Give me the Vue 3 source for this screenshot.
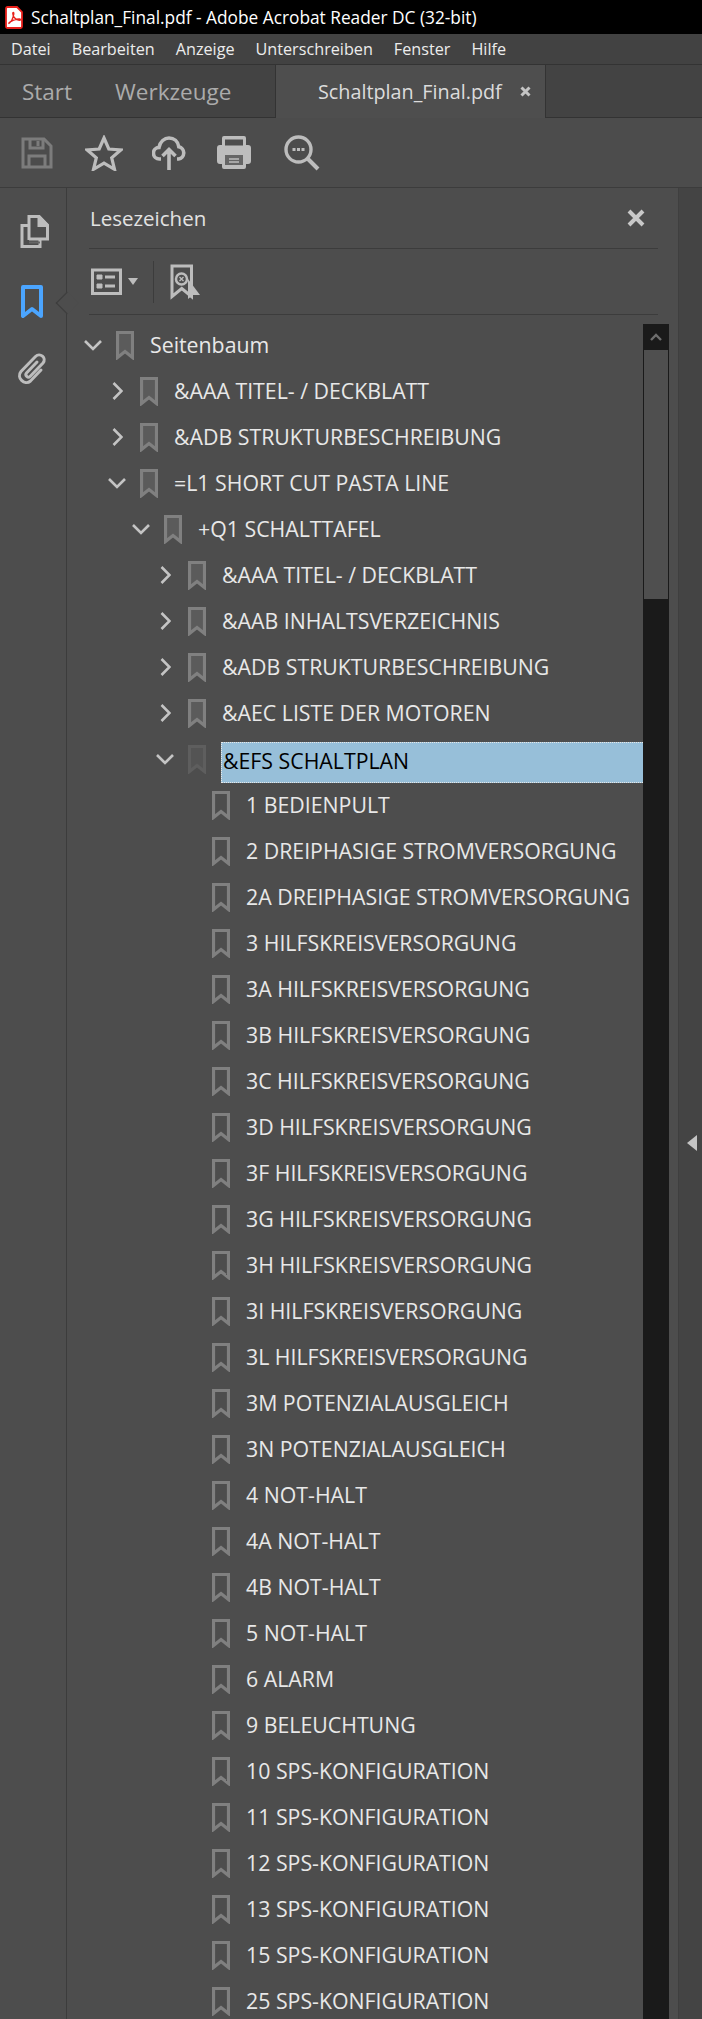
<script setup>
const menus = ['Datei', 'Bearbeiten', 'Anzeige', 'Unterschreiben', 'Fenster', 'Hilfe']
const leaves = ['1 BEDIENPULT','2 DREIPHASIGE STROMVERSORGUNG','2A DREIPHASIGE STROMVERSORGUNG','3 HILFSKREISVERSORGUNG','3A HILFSKREISVERSORGUNG','3B HILFSKREISVERSORGUNG','3C HILFSKREISVERSORGUNG','3D HILFSKREISVERSORGUNG','3F HILFSKREISVERSORGUNG','3G HILFSKREISVERSORGUNG','3H HILFSKREISVERSORGUNG','3I HILFSKREISVERSORGUNG','3L HILFSKREISVERSORGUNG','3M POTENZIALAUSGLEICH','3N POTENZIALAUSGLEICH','4 NOT-HALT','4A NOT-HALT','4B NOT-HALT','5 NOT-HALT','6 ALARM','9 BELEUCHTUNG','10 SPS-KONFIGURATION','11 SPS-KONFIGURATION','12 SPS-KONFIGURATION','13 SPS-KONFIGURATION','15 SPS-KONFIGURATION','25 SPS-KONFIGURATION']
const rows = [
  { t: 'Seitenbaum', l: 0, c: 'down' },
  { t: '&AAA TITEL- / DECKBLATT', l: 1, c: 'right' },
  { t: '&ADB STRUKTURBESCHREIBUNG', l: 1, c: 'right' },
  { t: '=L1 SHORT CUT PASTA LINE', l: 1, c: 'down' },
  { t: '+Q1 SCHALTTAFEL', l: 2, c: 'down' },
  { t: '&AAA TITEL- / DECKBLATT', l: 3, c: 'right' },
  { t: '&AAB INHALTSVERZEICHNIS', l: 3, c: 'right' },
  { t: '&ADB STRUKTURBESCHREIBUNG', l: 3, c: 'right' },
  { t: '&AEC LISTE DER MOTOREN', l: 3, c: 'right' },
  { t: '&EFS SCHALTPLAN', l: 3, c: 'down', sel: true },
  ...leaves.map(t => ({ t, l: 4 })),
]
</script>

<template>
  <div class="app">
    <header class="title">
      <svg class="pdf" width="18" height="23" viewBox="0 0 18 23">
        <path d="M2.500 1h9.500l5 5v14.500a1.500 1.500 0 0 1-1.500 1.500H2.500A1.500 1.500 0 0 1 1 20.500v-18A1.500 1.500 0 0 1 2.500 1z" fill="#fff" stroke="#e8201b" stroke-width="1.800"/>
        <path d="M3.500 17.500c2-1 4.500-5 5.300-9.500.3-2-1-2-1-.5 0 3 3 6.500 6.500 6.800 1.500 0 1.500-1.300 0-1.300-3 0-8.500 1.500-10.800 4.500z" fill="none" stroke="#e8201b" stroke-width="1.400"/>
      </svg>
      <span>Schaltplan_Final.pdf - Adobe Acrobat Reader DC (32-bit)</span>
    </header>

    <nav class="menu">
      <span v-for="m in menus" :key="m">{{ m }}</span>
    </nav>

    <div class="tabs">
      <div class="tabs-left">
        <span>Start</span>
        <span>Werkzeuge</span>
      </div>
      <div class="tab-active">
        <span>Schaltplan_Final.pdf</span>
        <svg width="11" height="11" viewBox="0 0 11 11"><path d="M1.500 1.500l8 8M9.500 1.500l-8 8" stroke="#c4c4c4" stroke-width="3"/></svg>
      </div>
      <div class="tabs-right"></div>
    </div>

    <div class="toolbar">
      <svg class="t-save" width="32" height="32" viewBox="0 0 32 32" fill="none" stroke="#7c7c7c" stroke-width="3">
        <path d="M2 2h21l7 7v21H2z"/><path d="M9 2v9h13V2M8 30V19h16v11"/><path d="M17 4v5" stroke-width="3"/>
      </svg>
      <svg class="t-star" width="38" height="36" viewBox="0 0 38 36" fill="none" stroke="#bdbdbd" stroke-width="3.200">
        <path d="M19 3l4.800 11 12 1-9.100 7.800 2.800 11.500L19 28.200 8.500 34.300l2.800-11.500L2.200 15l12-1z"/>
      </svg>
      <svg class="t-cloud" width="34" height="36" viewBox="0 0 34 36" fill="none" stroke="#bdbdbd" stroke-width="3.600">
        <path d="M9 24H7.500a5.800 5.800 0 0 1-.5-11.600C8 6.500 12.500 3 17 3c5 0 9 3.500 9.800 8.800A6.200 6.200 0 0 1 26.500 24H25"/>
        <path d="M17 35V15M10.500 21L17 14.500 23.500 21"/>
      </svg>
      <svg class="t-print" width="34" height="33" viewBox="0 0 34 33">
        <path d="M7 0h20a2 2 0 0 1 2 2v7h2a3 3 0 0 1 3 3v13a3 3 0 0 1-3 3h-2v3a2 2 0 0 1-2 2H7a2 2 0 0 1-2-2v-3H3a3 3 0 0 1-3-3V12a3 3 0 0 1 3-3h2V2a2 2 0 0 1 2-2z" fill="#bdbdbd"/>
        <path d="M8 3.500h18v6H8z" fill="#4d4d4d"/>
        <path d="M8 19h18v10H8z" fill="#666"/>
        <path d="M12 23h10M12 26h10" stroke="#bdbdbd" stroke-width="1.500"/>
      </svg>
      <svg class="t-search" width="36" height="36" viewBox="0 0 36 36" fill="none" stroke="#bdbdbd" stroke-width="3.400">
        <circle cx="14.500" cy="14.500" r="12.500"/><path d="M24 24l10 10" stroke-width="4"/>
        <path d="M8.500 14.500h3M13 14.500h3M17.500 14.500h3" stroke-width="3"/>
      </svg>
    </div>

    <div class="main">
      <aside class="rail">
        <svg class="r-pages" width="30" height="35" viewBox="0 0 30 35" fill="none" stroke="#bdbdbd" stroke-width="3">
          <path d="M10 25V1.500H20L28.500 10V24H10"/>
          <path d="M20 1.500V10.500H28.500z" fill="#bdbdbd"/>
          <path d="M9 10.500H3V31.500H21V25"/>
          <path d="M10 27.500h11" stroke="#666" stroke-width="2"/>
        </svg>
        <svg class="r-book" width="22" height="34" viewBox="0 0 22 34" fill="none" stroke="#4ba5ff" stroke-width="4" stroke-linejoin="round">
          <path d="M2 2H20V31L11 24 2 31Z"/>
        </svg>
        <svg class="r-clip" width="30" height="32" viewBox="0 0 30 32" fill="none" stroke="#bdbdbd" stroke-width="3" stroke-linecap="round">
          <path d="M20 9L9.500 20C7.500 22.500 11 25.500 13 23.500L26 10C30 5 23 -1 18.500 3.500L4 18.500C-1 24.500 7.500 33 13.500 28L24 17"/>
        </svg>
        <span class="notch"></span>
      </aside>

      <section class="panel">
        <div class="p-head">
          <span>Lesezeichen</span>
          <svg width="18" height="18" viewBox="0 0 18 18"><path d="M2 2l14 14M16 2L2 16" stroke="#c8c8c8" stroke-width="4"/></svg>
        </div>
        <div class="p-tools">
          <svg width="31" height="27" viewBox="0 0 31 27" fill="none" stroke="#bdbdbd" stroke-width="3">
            <path d="M1.500 2h28v23.500h-28z"/><path d="M6 7h5v4H6zM6 16h5v4H6z" fill="#bdbdbd" stroke-width="1"/><path d="M14 9h10M14 18h10"/>
          </svg>
          <span class="caret"></span>
          <span class="sep"></span>
          <svg width="31" height="36" viewBox="0 0 31 36">
            <path d="M2 2h19.500v30.500l-9.750-8-9.750 8z" fill="none" stroke="#bdbdbd" stroke-width="3"/>
            <circle cx="11.500" cy="15" r="5.500" fill="none" stroke="#bdbdbd" stroke-width="2.500"/>
            <path d="M9.500 13l4 4M13.500 13l-4 4" stroke="#bdbdbd" stroke-width="1.300"/>
            <path d="M18 15l12 16h-7l-5 4z" fill="#bdbdbd"/>
          </svg>
        </div>

        <div class="tree-wrap">
          <div class="tree">
            <div v-for="(r, i) in rows" :key="i" class="row" :style="{ paddingLeft: 14 + r.l * 24 + 'px' }">
              <span class="chev">
                <svg v-if="r.c === 'down'" width="18" height="11" viewBox="0 0 18 11" fill="none" stroke="#c4c4c4" stroke-width="2.600"><path d="M1 1l8 8 8-8"/></svg>
                <svg v-else-if="r.c === 'right'" width="11" height="18" viewBox="0 0 11 18" fill="none" stroke="#c4c4c4" stroke-width="2.600"><path d="M1.500 1l8 8-8 8"/></svg>
              </span>
              <svg class="mark" width="18" height="29" viewBox="0 0 18 29">
                <path d="M1.500 1.500h15v25L9 20.500l-7.500 6z" :fill="r.c ? '#5b5b5b' : 'none'" :stroke="r.sel ? '#5e5e5e' : '#808080'" stroke-width="3.200" :class="{ dim: r.sel }"/>
              </svg>
              <span class="label" :class="{ sel: r.sel }">{{ r.t }}</span>
            </div>
          </div>
          <div class="scroll">
            <div class="s-up"><svg width="12" height="8" viewBox="0 0 12 8" fill="none" stroke="#6e6e6e" stroke-width="2.400"><path d="M1 7l5-5 5 5"/></svg></div>
            <div class="s-thumb"></div>
          </div>
        </div>
      </section>

      <aside class="right">
        <span class="handle"></span>
      </aside>
    </div>
  </div>
</template>

<style>
html, body { margin: 0; padding: 0; background: #4d4d4d; }
</style>

<style scoped>
.app {
  width: 702px;
  height: 2019px;
  overflow: hidden;
  display: flex;
  flex-direction: column;
  background: #4d4d4d;
  font-family: "Open Sans", "Noto Sans", sans-serif;
  color: #e6e6e6;
}
.title {
  height: 34px;
  background: #000;
  display: flex;
  align-items: center;
  gap: 8px;
  padding-left: 5px;
  color: #fff;
  font-size: 17.300px;
  flex: none;
}
.menu {
  height: 30px;
  background: #424242;
  display: flex;
  align-items: center;
  gap: 21px;
  padding-left: 11px;
  font-size: 16.200px;
  color: #ececec;
  flex: none;
}
.tabs {
  height: 54px;
  display: flex;
  flex: none;
  border-top: 1px solid #333;
  box-sizing: border-box;
  font-size: 22.500px;
}
.tabs-left {
  width: 276px;
  box-sizing: border-box;
  background: #434343;
  border-right: 1px solid #333;
  border-bottom: 1px solid #333;
  display: flex;
  align-items: center;
  gap: 43px;
  padding-left: 22px;
  color: #ababab;
}
.tab-active {
  width: 269px;
  box-sizing: border-box;
  background: #4e4e4e;
  display: flex;
  align-items: center;
  padding-left: 42px;
  gap: 18px;
  font-size: 19.800px;
  color: #dcdcdc;
}
.tabs-right {
  flex: 1;
  background: #434343;
  border-left: 1px solid #333;
  border-bottom: 1px solid #333;
}
.toolbar {
  height: 70px;
  flex: none;
  box-sizing: border-box;
  border-bottom: 1px solid #3c3c3c;
  display: flex;
  align-items: center;
  padding-left: 21px;
  background: #4c4c4c;
}
.t-star { margin-left: 32px; }
.t-cloud { margin-left: 29px; }
.t-print { margin-left: 31px; }
.t-search { margin-left: 33px; }
.main {
  flex: 1;
  display: flex;
  min-height: 0;
}
.rail {
  width: 67px;
  flex: none;
  box-sizing: border-box;
  border-right: 1px solid #3c3c3c;
  position: relative;
  display: flex;
  flex-direction: column;
  align-items: center;
  padding-top: 27px;
}
.r-pages { margin-left: 2px; }
.r-book { margin-top: 35px; margin-right: 2px; }
.r-clip { margin-top: 34px; margin-right: 2px; }
.notch {
  position: absolute;
  right: -1px;
  top: 107px;
  width: 16px;
  height: 16px;
  background: #4d4d4d;
  border-left: 1px solid #3c3c3c;
  border-bottom: 1px solid #3c3c3c;
  transform: translateX(8px) rotate(45deg);
  box-sizing: border-box;
}
.panel {
  flex: 1;
  min-width: 0;
  display: flex;
  flex-direction: column;
}
.p-head {
  height: 61px;
  flex: none;
  box-sizing: border-box;
  margin: 0 20px 0 22px;
  padding: 0 13px 0 1px;
  border-bottom: 1px solid #3c3c3c;
  display: flex;
  align-items: center;
  justify-content: space-between;
  font-size: 20.500px;
  color: #e2e2e2;
}
.p-tools {
  height: 66px;
  flex: none;
  box-sizing: border-box;
  margin: 0 20px 0 22px;
  padding-left: 2px;
  border-bottom: 1px solid #3c3c3c;
  display: flex;
  align-items: center;
}
.caret {
  width: 0;
  height: 0;
  margin-left: 6px;
  border: 5px solid transparent;
  border-top: 7px solid #bdbdbd;
  border-bottom: 0;
}
.sep {
  width: 1px;
  height: 42px;
  background: #3c3c3c;
  margin: 0 16px 0 15px;
}
.tree-wrap {
  flex: 1;
  min-height: 0;
  display: flex;
  margin-top: 7px;
  padding-right: 9px;
}
.tree {
  flex: 1;
  min-width: 0;
}
.row {
  height: 46px;
  display: flex;
  align-items: center;
  box-sizing: border-box;
  font-size: 21.300px;
  color: #e8e8e8;
}
.chev {
  width: 24px;
  flex: none;
  display: flex;
  justify-content: center;
  align-items: center;
}
.mark {
  margin-left: 11px;
  flex: none;
}
.mark .dim { fill: #545454; }
.label {
  margin-left: 16px;
  margin-bottom: 2px;
  white-space: nowrap;
}
.label.sel {
  flex: 1;
  margin-left: 15px;
  margin-top: 6px;
  margin-bottom: 0;
  height: 41px;
  box-sizing: border-box;
  padding: 0 0 4px 1px;
  display: flex;
  align-items: center;
  background: #97bfd9;
  color: #000;
  border: 1px dotted #e8e8e8;
  border-right: 0;
}
.scroll {
  width: 26px;
  flex: none;
  margin-top: 2px;
  background: #1a1a1a;
  display: flex;
  flex-direction: column;
  align-items: center;
}
.s-up {
  height: 26px;
  display: flex;
  align-items: center;
  justify-content: center;
  flex: none;
}
.s-thumb {
  width: 24px;
  height: 249px;
  background: #4f4f4f;
  flex: none;
}
.right {
  width: 24px;
  flex: none;
  box-sizing: border-box;
  background: #444;
  border-left: 1px solid #3f3f3f;
  position: relative;
}
.handle {
  position: absolute;
  left: 8px;
  top: 947px;
  width: 0;
  height: 0;
  border: 8px solid transparent;
  border-left: 0;
  border-right: 10px solid #c4c4c4;
}
</style>
